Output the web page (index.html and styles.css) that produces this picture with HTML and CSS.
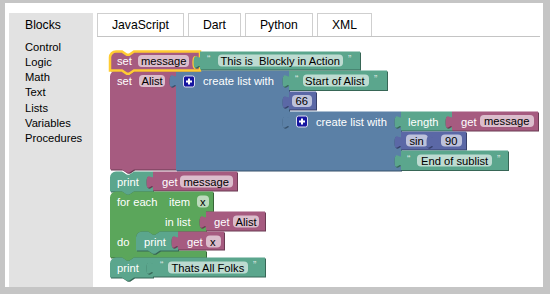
FILE: index.html
```html
<!DOCTYPE html>
<html>
<head>
<meta charset="utf-8">
<link rel="stylesheet" href="styles.css">
</head>
<body>
<div class="frame">
  <div class="app">
    <div class="tab-blocks">Blocks</div>
    <div class="tabbar">
      <div class="tab">JavaScript</div>
      <div class="tab">Dart</div>
      <div class="tab">Python</div>
      <div class="tab">XML</div>
    </div>
    <ul class="toolbox">
      <li>Control</li>
      <li>Logic</li>
      <li>Math</li>
      <li>Text</li>
      <li>Lists</li>
      <li>Variables</li>
      <li>Procedures</li>
    </ul>
    <div class="workspace">
      <svg class="canvas" width="447" height="250" viewBox="93 36.5 447 250">
        <defs>
          <path id="pA" d="M110,57 A6,6 0 0 1 116,51 H122 l4.8,3.2 2.4,0 4.8,-3.2 H200 v5 c0,8 -6.4,-6.4 -6.4,6 s6.4,-2 6.4,6 V70 H134 l-4.8,3.2 -2.4,0 -4.8,-3.2 H110 Z"/>
          <path id="pT1" d="M200,51 H360 V69 H200 V68 c0,-8 -6.4,6.4 -6.4,-6 s6.4,-2 6.4,-6 Z"/>
          <path id="pB" d="M110,76 A6,6 0 0 1 116,70 H122 l4.8,3.2 2.4,0 4.8,-3.2 H176 v5 c0,8 -6.4,-6.4 -6.4,6 s6.4,-2 6.4,6 V169 H134 l-4.8,3.2 -2.4,0 -4.8,-3.2 H110 Z"/>
          <path id="pC" d="M176,70 H289 v5 c0,8 -6.4,-6.4 -6.4,6 s6.4,-2 6.4,6 V91 v5 c0,8 -6.4,-6.4 -6.4,6 s6.4,-2 6.4,6 V111 v5 c0,8 -6.4,-6.4 -6.4,6 s6.4,-2 6.4,6 V170 H176 V87 c0,-8 -6.4,6.4 -6.4,-6 s6.4,-2 6.4,-6 Z"/>
          <path id="pD" d="M289,70 H387 V89.5 H289 V87 c0,-8 -6.4,6.4 -6.4,-6 s6.4,-2 6.4,-6 Z"/>
          <path id="pE" d="M289,91 H316 V109 H289 V108 c0,-8 -6.4,6.4 -6.4,-6 s6.4,-2 6.4,-6 Z"/>
          <path id="pF" d="M289,111 H401 v5 c0,8 -6.4,-6.4 -6.4,6 s6.4,-2 6.4,6 V131 v5 c0,8 -6.4,-6.4 -6.4,6 s6.4,-2 6.4,6 V150 v5 c0,8 -6.4,-6.4 -6.4,6 s6.4,-2 6.4,6 V170 H289 V128 c0,-8 -6.4,6.4 -6.4,-6 s6.4,-2 6.4,-6 Z"/>
          <path id="pG" d="M401,111 H452 v5 c0,8 -6.4,-6.4 -6.4,6 s6.4,-2 6.4,6 V130 H401 V128 c0,-8 -6.4,6.4 -6.4,-6 s6.4,-2 6.4,-6 Z"/>
          <path id="pH" d="M452,111 H538 V130 H452 V128 c0,-8 -6.4,6.4 -6.4,-6 s6.4,-2 6.4,-6 Z"/>
          <path id="pI" d="M401,131 H433 v5 c0,8 -6.4,-6.4 -6.4,6 s6.4,-2 6.4,6 V149 H401 V148 c0,-8 -6.4,6.4 -6.4,-6 s6.4,-2 6.4,-6 Z"/>
          <path id="pJ" d="M433,131 H466 V149 H433 V148 c0,-8 -6.4,6.4 -6.4,-6 s6.4,-2 6.4,-6 Z"/>
          <path id="pK" d="M401,150 H508 V169.5 H401 V167 c0,-8 -6.4,6.4 -6.4,-6 s6.4,-2 6.4,-6 Z"/>
          <path id="pL" d="M110,177 A6,6 0 0 1 116,171 H122 l4.8,3.2 2.4,0 4.8,-3.2 H153 v5 c0,8 -6.4,-6.4 -6.4,6 s6.4,-2 6.4,6 V191 H134 l-4.8,3.2 -2.4,0 -4.8,-3.2 H110 Z"/>
          <path id="pM" d="M153,171 H237 V190 H153 V188 c0,-8 -6.4,6.4 -6.4,-6 s6.4,-2 6.4,-6 Z"/>
          <path id="pN" d="M110,197 A6,6 0 0 1 116,191 H122 l4.8,3.2 2.4,0 4.8,-3.2 H213 V211 H206 v5 c0,8 -6.4,-6.4 -6.4,6 s6.4,-2 6.4,6 V231 H160 l-4.8,3.2 -2.4,0 -4.8,-3.2 H142 A6,6 0 0 0 136,237 V244 A6,6 0 0 0 142,250 H206 V257 H134 l-4.8,3.2 -2.4,0 -4.8,-3.2 H110 Z"/>
          <path id="pO" d="M206,211 H265 V230 H206 V228 c0,-8 -6.4,6.4 -6.4,-6 s6.4,-2 6.4,-6 Z"/>
          <path id="pP" d="M136,237 A6,6 0 0 1 142,231 H148 l4.8,3.2 2.4,0 4.8,-3.2 H178 v5 c0,8 -6.4,-6.4 -6.4,6 s6.4,-2 6.4,6 V250 H160 l-4.8,3.2 -2.4,0 -4.8,-3.2 H136 Z"/>
          <path id="pQ" d="M178,231 H224 V249 H178 V248 c0,-8 -6.4,6.4 -6.4,-6 s6.4,-2 6.4,-6 Z"/>
          <path id="pR" d="M110,263 A6,6 0 0 1 116,257 H122 l4.8,3.2 2.4,0 4.8,-3.2 H153 v5 c0,8 -6.4,-6.4 -6.4,6 s6.4,-2 6.4,6 V277 H134 l-4.8,3.2 -2.4,0 -4.8,-3.2 H110 Z"/>
          <path id="pS" d="M153,257 H265 V276 H153 V274 c0,-8 -6.4,6.4 -6.4,-6 s6.4,-2 6.4,-6 Z"/>
        </defs>

        <!-- set Alist -->
        <use href="#pB" class="sh-var" transform="translate(1,1)"/>
        <use href="#pB" class="c-var"/>
        <text class="lbl" x="117" y="84.5">set</text>
        <rect class="pill" x="139" y="74.5" width="26" height="12" rx="4"/>
        <text class="fld" x="141.5" y="84.5">Alist</text>

        <!-- create list with (outer) -->
        <use href="#pC" class="sh-list" transform="translate(1,1)"/>
        <use href="#pC" class="c-list"/>
        <rect class="plus-box" x="183.5" y="75.5" width="11" height="11" rx="2"/>
        <path class="plus" d="M186,81 H192 M189,78 V84"/>
        <text class="lbl" x="203" y="84.5">create list with</text>

        <use href="#pD" class="sh-text" transform="translate(1,1)"/>
        <use href="#pD" class="c-text"/>
        <text class="quote" x="295" y="82">“</text>
        <rect class="pill" x="303" y="74" width="66" height="12" rx="4"/>
        <text class="fld" x="305" y="84">Start of Alist</text>
        <text class="quote" x="374" y="82">”</text>

        <use href="#pE" class="sh-math" transform="translate(1,1)"/>
        <use href="#pE" class="c-math"/>
        <rect class="pill" x="292" y="94.5" width="20" height="12" rx="4"/>
        <text class="fld" x="295.5" y="104.5">66</text>

        <!-- create list with (inner) -->
        <use href="#pF" class="sh-list" transform="translate(1,1)"/>
        <use href="#pF" class="c-list"/>
        <rect class="plus-box" x="296.5" y="115.5" width="11" height="11" rx="2"/>
        <path class="plus" d="M299,121 H305 M302,118 V124"/>
        <text class="lbl" x="316" y="125">create list with</text>

        <use href="#pG" class="sh-text" transform="translate(1,1)"/>
        <use href="#pG" class="c-text"/>
        <text class="lbl" x="408" y="125">length</text>

        <use href="#pH" class="sh-var" transform="translate(1,1)"/>
        <use href="#pH" class="c-var"/>
        <text class="lbl" x="461" y="125">get</text>
        <rect class="pill" x="480" y="114.5" width="54" height="12" rx="4"/>
        <text class="fld" x="484" y="124.5">message</text>

        <use href="#pI" class="sh-math" transform="translate(1,1)"/>
        <use href="#pI" class="c-math"/>
        <rect class="pill" x="406" y="134" width="22" height="12" rx="4"/>
        <text class="fld" x="409.5" y="144">sin</text>

        <use href="#pJ" class="sh-math" transform="translate(1,1)"/>
        <use href="#pJ" class="c-math"/>
        <rect class="pill" x="441" y="134" width="21" height="12" rx="4"/>
        <text class="fld" x="445" y="144">90</text>

        <use href="#pK" class="sh-text" transform="translate(1,1)"/>
        <use href="#pK" class="c-text"/>
        <text class="quote" x="407" y="162">“</text>
        <rect class="pill" x="417" y="154" width="75" height="12" rx="4"/>
        <text class="fld" x="421" y="164">End of sublist</text>
        <text class="quote" x="497" y="162">”</text>

        <!-- set message (selected) -->
        <use href="#pA" class="sh-var" transform="translate(1,1)"/>
        <use href="#pA" class="c-var"/>
        <use href="#pA" class="selected"/>
        <text class="lbl" x="117" y="64.5">set</text>
        <rect class="pill" x="138" y="54.5" width="51" height="12" rx="4"/>
        <text class="fld" x="141" y="64.5">message</text>

        <use href="#pT1" class="sh-text" transform="translate(1,1)"/>
        <use href="#pT1" class="c-text"/>
        <text class="quote" x="207" y="62">“</text>
        <rect class="pill" x="218" y="54" width="125" height="12" rx="4"/>
        <text class="fld pre" x="220.5" y="64">This is  Blockly in Action</text>
        <text class="quote" x="348" y="62">”</text>

        <!-- print get message -->
        <use href="#pL" class="sh-text" transform="translate(1,1)"/>
        <use href="#pL" class="c-text"/>
        <text class="lbl" x="117" y="185">print</text>

        <use href="#pM" class="sh-var" transform="translate(1,1)"/>
        <use href="#pM" class="c-var"/>
        <text class="lbl" x="162" y="185">get</text>
        <rect class="pill" x="180" y="175" width="53" height="12" rx="4"/>
        <text class="fld" x="183.5" y="185">message</text>

        <!-- for each -->
        <use href="#pN" class="sh-loop" transform="translate(1,1)"/>
        <use href="#pN" class="c-loop"/>
        <text class="lbl" x="117" y="205">for each</text>
        <text class="lbl" x="169" y="205">item</text>
        <rect class="pill" x="197" y="195" width="12" height="12" rx="4"/>
        <text class="fld" x="200" y="205">x</text>
        <text class="lbl" x="165" y="225">in list</text>
        <text class="lbl" x="117" y="245">do</text>

        <use href="#pO" class="sh-var" transform="translate(1,1)"/>
        <use href="#pO" class="c-var"/>
        <text class="lbl" x="214" y="225">get</text>
        <rect class="pill" x="233" y="215" width="26" height="12" rx="4"/>
        <text class="fld" x="235.5" y="225">Alist</text>

        <use href="#pP" class="sh-text" transform="translate(1,1)"/>
        <use href="#pP" class="c-text"/>
        <text class="lbl" x="144" y="245">print</text>

        <use href="#pQ" class="sh-var" transform="translate(1,1)"/>
        <use href="#pQ" class="c-var"/>
        <text class="lbl" x="187" y="245">get</text>
        <rect class="pill" x="206" y="235" width="15" height="12" rx="4"/>
        <text class="fld" x="210" y="245">x</text>

        <!-- print Thats All Folks -->
        <use href="#pR" class="sh-text" transform="translate(1,1)"/>
        <use href="#pR" class="c-text"/>
        <text class="lbl" x="117" y="271">print</text>

        <use href="#pS" class="sh-text" transform="translate(1,1)"/>
        <use href="#pS" class="c-text"/>
        <text class="quote" x="160" y="268">“</text>
        <rect class="pill" x="168" y="261" width="80" height="12" rx="4"/>
        <text class="fld" x="171.5" y="271">Thats All Folks</text>
        <text class="quote" x="253" y="268">”</text>
      </svg>
    </div>
  </div>
</div>
</body>
</html>
```

FILE: styles.css
```css
html, body {
  margin: 0;
  padding: 0;
}

body {
  background: #c5c5c5;
  width: 550px;
  height: 294px;
  overflow: hidden;
  font-family: "Liberation Sans", Arial, sans-serif;
  color: #000;
}

.frame {
  margin: 3px 0 0 5px;
  width: 538px;
  height: 284px;
  box-sizing: border-box;
  padding: 9.5px 3px 0.5px 4px;
  background: #fff;
}

.app {
  display: grid;
  grid-template-columns: 84px 1fr;
  grid-template-rows: 24px 1fr;
  height: 100%;
}

.tab-blocks {
  background: #e2e2e2;
  padding-left: 16px;
  font-size: 12.2px;
  line-height: 24px;
}

.tabbar {
  display: flex;
  align-items: flex-end;
  gap: 4px;
  margin-left: 4px;
  border-bottom: 1px solid #c4c4c4;
}

.tab {
  height: 23px;
  box-sizing: border-box;
  padding: 0 14px;
  border: 1px solid #cfcfcf;
  border-bottom: none;
  font-size: 12.2px;
  line-height: 22px;
  background: #fff;
}

.toolbox {
  margin: 0;
  padding: 3px 0 0 16px;
  list-style: none;
  background: #e2e2e2;
  font-size: 11.2px;
  line-height: 15.3px;
}

.workspace {
  background: #fff;
  overflow: hidden;
}

.canvas {
  display: block;
  font-family: "Liberation Sans", Arial, sans-serif;
  font-size: 11.2px;
}

.c-var { fill: #a65b80; }
.sh-var { fill: #6a3a52; }
.c-list { fill: #5b80a6; }
.sh-list { fill: #36506a; }
.c-text { fill: #5ba68d; }
.sh-text { fill: #376656; }
.c-math { fill: #5b68a6; }
.sh-math { fill: #363f69; }
.c-loop { fill: #5ba65b; }
.sh-loop { fill: #376637; }

.selected {
  fill: none;
  stroke: #fc3;
  stroke-width: 2.5px;
}

.lbl { fill: #fff; }
.fld { fill: #000; }
.pre { white-space: pre; }

.pill {
  fill: #fff;
  fill-opacity: 0.6;
}

.quote {
  fill: #fff;
  fill-opacity: 0.75;
  font-size: 10px;
}

.plus-box {
  fill: #1515a0;
  stroke: #dde;
  stroke-width: 1px;
}

.plus {
  stroke: #fff;
  stroke-width: 2px;
  fill: none;
}
```
